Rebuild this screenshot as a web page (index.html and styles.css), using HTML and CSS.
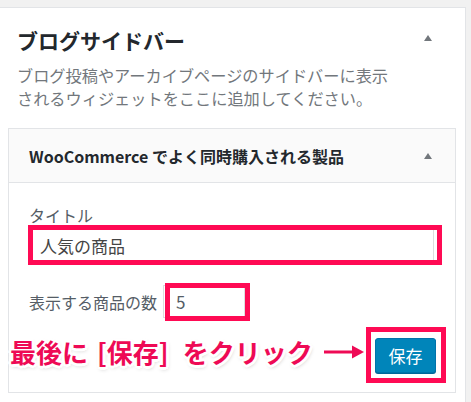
FILE: index.html
```html
<!DOCTYPE html>
<html lang="ja">
<head>
<meta charset="utf-8">
<link rel="stylesheet" href="styles.css">
</head>
<body>
<div class="sidebar">
  <div class="sidebar-header">
    <h2 class="sidebar-title">ブログサイドバー</h2>
    <span class="toggle"></span>
  </div>
  <p class="sidebar-desc">ブログ投稿やアーカイブページのサイドバーに表示<br>されるウィジェットをここに追加してください。</p>

  <div class="widget">
    <div class="widget-header">
      <h3 class="widget-title">WooCommerce でよく同時購入される製品</h3>
      <span class="toggle"></span>
    </div>
    <div class="widget-body">
      <label class="field-label">タイトル</label>
      <div class="field hl-wrap">
        <input class="text-input" type="text" value="人気の商品">
        <span class="hl hl-title"></span>
      </div>
      <div class="num-row">
        <span class="field-label">表示する商品の数</span>
        <div class="hl-wrap num-wrap">
          <input class="num-input" type="text" value="5">
          <span class="hl hl-num"></span>
        </div>
      </div>
      <div class="actions">
        <div class="callout">
          <span class="callout-text">最後に<span class="sp"></span>[保存]<span class="sp2"></span>をクリック</span>
          <svg class="callout-arrow" width="42" height="16" viewBox="0 0 42 16">
            <line x1="0" y1="8" x2="32" y2="8" stroke="#fff" stroke-width="7" stroke-linecap="round"/>
            <line x1="1" y1="8" x2="32" y2="8" stroke="#ee0a55" stroke-width="3"/>
            <polygon points="29,1.5 41,8 29,14.5" fill="#ee0a55"/>
          </svg>
        </div>
        <div class="hl-wrap">
          <button class="save-btn">保存</button>
          <span class="hl hl-btn"></span>
        </div>
      </div>
    </div>
  </div>
</div>
</body>
</html>
```

FILE: styles.css
```css
* { box-sizing: border-box; }
html, body { margin: 0; padding: 0; }
body {
  background: #f1f1f1;
  font-family: "Noto Sans CJK JP", "Noto Sans", sans-serif;
  width: 471px;
  height: 402px;
  overflow: hidden;
}
.sidebar {
  width: 467px;
  height: 402px;
  margin: 7px 0 0 -1px;
  background: #fff;
  border: 1px solid #e2e4e7;
  border-bottom: none;
}
.sidebar-header {
  display: flex;
  align-items: center;
  justify-content: space-between;
  padding: 18px 33px 0 17px;
}
.sidebar-title {
  margin: 0;
  font-size: 21px;
  line-height: 28px;
  font-weight: 700;
  color: #23282d;
}
.toggle {
  width: 0;
  height: 0;
  border-left: 4.5px solid transparent;
  border-right: 4.5px solid transparent;
  border-bottom: 6px solid #72777c;
  margin-bottom: 5px;
}
.sidebar-desc {
  margin: 10px 0 0 17px;
  font-size: 16.2px;
  line-height: 23px;
  color: #72777c;
}
.widget {
  width: 448px;
  margin: 18px 0 0 8px;
  border: 1px solid #e2e4e7;
  background: #fff;
}
.widget-header {
  height: 54px;
  display: flex;
  align-items: center;
  justify-content: space-between;
  padding: 0 23px 0 20px;
  background: #fafafa;
  border-bottom: 1px solid #e2e4e7;
}
.widget-header .toggle { margin-bottom: 0; }
.widget-title {
  margin: 0;
  font-size: 16px;
  font-weight: 700;
  color: #23282d;
}
.widget-body {
  padding: 21px 19px 19px 20px;
}
.field-label {
  display: block;
  font-size: 16px;
  line-height: 22px;
  color: #555d66;
}
.hl-wrap { position: relative; }
.field { margin-top: 3px; }
.text-input {
  display: block;
  width: 405px;
  height: 32px;
  border: 1px solid #ddd;
  padding: 0 10px;
  font-family: inherit;
  font-size: 17px;
  color: #444;
  background: #fff;
  outline: none;
}
.hl {
  position: absolute;
  border: 5px solid #ff0a54;
  pointer-events: none;
}
.hl-title { left: -1px; top: -4px; right: -6px; bottom: -4px; }
.num-row {
  display: flex;
  align-items: center;
  margin-top: 24px;
}
.num-wrap { margin-left: 6px; }
.num-input {
  display: block;
  width: 82px;
  height: 33px;
  border: 1px solid #ddd;
  padding: 0 0 0 12px;
  font-family: inherit;
  font-size: 17px;
  color: #555d66;
  background: #fff;
  outline: none;
}
.hl-num { left: 2px; top: -2px; right: -5px; bottom: -3px; }
.actions {
  position: relative;
  display: flex;
  justify-content: flex-end;
  margin-top: 20px;
}
.save-btn {
  display: block;
  width: 61px;
  height: 35px;
  background: #0085ba;
  border: 1px solid #0073aa;
  border-radius: 3px;
  box-shadow: 0 1px 0 #006799;
  color: #fff;
  font-family: inherit;
  font-size: 17px;
  padding: 0;
}
.hl-btn { left: -9px; top: -11px; right: -10px; bottom: -10px; }
.callout {
  position: absolute;
  left: -19px;
  top: -3px;
  display: flex;
  align-items: center;
  height: 34px;
}
.callout-text {
  font-size: 26px;
  font-weight: 700;
  line-height: 34px;
  color: #ee0a55;
  white-space: nowrap;
  text-shadow:
    2px 0 0 #fff, -2px 0 0 #fff, 0 2px 0 #fff, 0 -2px 0 #fff,
    2px 2px 0 #fff, -2px -2px 0 #fff, 2px -2px 0 #fff, -2px 2px 0 #fff,
    3px 0 0 #fff, -3px 0 0 #fff, 0 3px 0 #fff, 0 -3px 0 #fff,
    1px 2px 4px rgba(0,0,0,0.3);
}
.sp { display: inline-block; width: 9px; }
.sp2 { display: inline-block; width: 14px; }
.callout-arrow { margin-left: 10px; }
```
